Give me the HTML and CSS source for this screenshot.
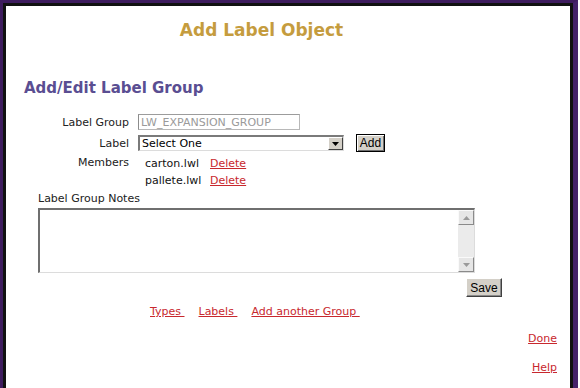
FILE: index.html
```html
<!doctype html>
<html lang="en">
  <head>
    <meta charset="UTF-8" />
    <title>Add Label Object</title>
    <link rel="stylesheet" href="styles.css">
  </head>
  <body>
    <div class="frame">
      <div class="page">
        <h1 class="title">Add Label Object</h1>
        <h2 class="heading">Add/Edit Label Group</h2>

        <div class="form">
          <div class="row row-group">
            <span class="label">Label Group</span>
            <input class="text-input" type="text" value="LW_EXPANSION_GROUP" readonly />
          </div>
          <div class="row row-label">
            <span class="label">Label</span>
            <div class="select">
              <span class="select-text">Select One</span>
              <span class="select-arrow">
                <svg width="7" height="4" viewBox="0 0 7 4"><path d="M0 0h7L3.5 4z" fill="#000"/></svg>
              </span>
            </div>
            <button class="btn btn-add">Add</button>
          </div>
          <div class="row row-member first-member">
            <span class="label">Members</span>
            <span class="member">carton.lwl</span>
            <a class="link" href="#">Delete</a>
          </div>
          <div class="row row-member">
            <span class="label"></span>
            <span class="member">pallete.lwl</span>
            <a class="link" href="#">Delete</a>
          </div>
        </div>

        <div class="notes-label">Label Group Notes</div>
        <div class="notes">
          <textarea class="notes-input"></textarea>
          <div class="scrollbar">
            <span class="scroll-btn">
              <svg width="7" height="4" viewBox="0 0 7 4"><path d="M0 4h7L3.5 0z" fill="#9a9a9a"/></svg>
            </span>
            <span class="scroll-track"></span>
            <span class="scroll-btn">
              <svg width="7" height="4" viewBox="0 0 7 4"><path d="M0 0h7L3.5 4z" fill="#9a9a9a"/></svg>
            </span>
          </div>
        </div>
        <div class="save-row">
          <button class="btn btn-save">Save</button>
        </div>

        <div class="nav-links">
          <a class="link" href="#">Types&nbsp;</a>
          <a class="link" href="#">Labels&nbsp;</a>
          <a class="link" href="#">Add another Group&nbsp;</a>
        </div>

        <div class="side-link done"><a class="link" href="#">Done</a></div>
        <div class="side-link help"><a class="link" href="#">Help</a></div>
      </div>
    </div>
  </body>
</html>
```

FILE: styles.css
```css
body {
  margin: 0;
  padding: 0;
  background-color: #fff;
  font-family: "DejaVu Sans", Verdana, sans-serif;
  font-size: 11px;
  color: #000;
}
.frame {
  margin-right: 2px;
  border-top: 3px solid #3e1c5e;
  border-left: 3px solid #3e1c5e;
  border-right: 5px solid #45226a;
  height: 385px;
  overflow: hidden;
}
.page {
  border-top: 3px solid #111;
  border-left: 3px solid #111;
  border-right: 3px solid #111;
  background-color: #fff;
  height: 382px;
}
.title {
  width: 511px;
  margin: 0;
  padding-top: 14px;
  text-align: center;
  font-size: 17px;
  line-height: 20px;
  font-weight: bold;
  color: #c59c3e;
}
.heading {
  margin: 39px 0 0 18px;
  font-size: 15px;
  line-height: 18px;
  font-weight: bold;
  color: #5a4e92;
}
.form {
  margin-top: 17px;
}
.row {
  display: flex;
  align-items: center;
}
.label {
  flex: none;
  width: 123px;
  margin-right: 9px;
  text-align: right;
  color: #222;
}
.row-group {
  height: 16px;
}
.row-label {
  height: 18px;
  margin-top: 4px;
}
.row-member {
  height: 18px;
}
.first-member {
  margin-top: 1px;
}
.first-member .member,
.first-member .link {
  padding-top: 2px;
}
.text-input {
  box-sizing: border-box;
  width: 162px;
  height: 16px;
  margin: 0;
  padding: 0 2px;
  border: 1px solid #b8b8b8;
  border-left-color: #8c8c8c;
  border-top-color: #9c9c9c;
  font-family: "DejaVu Sans", Verdana, sans-serif;
  font-size: 11px;
  color: #9a9a9a;
  background-color: #fff;
  outline: none;
}
.select {
  box-sizing: border-box;
  display: flex;
  align-items: center;
  width: 206px;
  height: 16px;
  border-top: 2px solid #7a7a7a;
  border-left: 2px solid #7a7a7a;
  border-right: 1px solid #dcdcdc;
  border-bottom: 1px solid #dcdcdc;
  background-color: #fff;
}
.select-text {
  flex: 1;
  padding-left: 2px;
}
.select-arrow {
  box-sizing: border-box;
  display: flex;
  align-items: center;
  justify-content: center;
  width: 15px;
  height: 13px;
  background-color: #d4d0c8;
  border: 1px solid;
  border-color: #fff #404040 #404040 #fff;
}
.btn {
  box-sizing: border-box;
  margin: 0;
  padding: 0;
  background-color: #d4d0c8;
  font-family: "Liberation Sans", Arial, sans-serif;
  font-size: 12px;
  color: #000;
  cursor: pointer;
}
.btn-add {
  width: 29px;
  height: 18px;
  margin-left: 12px;
  border: 1px solid #000;
  box-shadow: inset 1px 1px #fff, inset -1px -1px #6e6e6e;
}
.member {
  width: 65px;
  margin-left: 7px;
  color: #111;
}
.link {
  color: #c8282e;
  text-decoration: underline;
}
.notes-label {
  margin: 1px 0 0 32px;
  line-height: 18px;
  color: #222;
}
.notes {
  box-sizing: border-box;
  display: flex;
  width: 437px;
  height: 65px;
  margin: 0 0 0 32px;
  border-top: 2px solid #6f6f6f;
  border-left: 2px solid #6f6f6f;
  border-right: 1px solid #dcdcdc;
  border-bottom: 1px solid #dcdcdc;
}
.notes-input {
  flex: 1;
  margin: 0;
  border: none;
  resize: none;
  outline: none;
}
.scrollbar {
  display: flex;
  flex-direction: column;
  width: 16px;
  background-color: #ebebeb;
}
.scroll-btn {
  box-sizing: border-box;
  display: flex;
  align-items: center;
  justify-content: center;
  height: 15px;
  background-color: #e6e6e6;
  border: 1px solid;
  border-color: #fafafa #8a8a8a #8a8a8a #fafafa;
}
.scroll-track {
  flex: 1;
}
.save-row {
  display: flex;
  justify-content: flex-end;
  width: 496px;
  margin-top: 5px;
}
.btn-save {
  width: 36px;
  height: 19px;
  border: 1px solid;
  border-color: #fff #404040 #404040 #fff;
  box-shadow: inset -1px -1px #8a8a8a;
}
.nav-links {
  display: flex;
  gap: 14px;
  margin: 8px 0 0 144px;
  line-height: 14px;
}
.side-link {
  padding-right: 13px;
  text-align: right;
  line-height: 14px;
}
.done {
  margin-top: 13px;
}
.help {
  margin-top: 15px;
}
```
